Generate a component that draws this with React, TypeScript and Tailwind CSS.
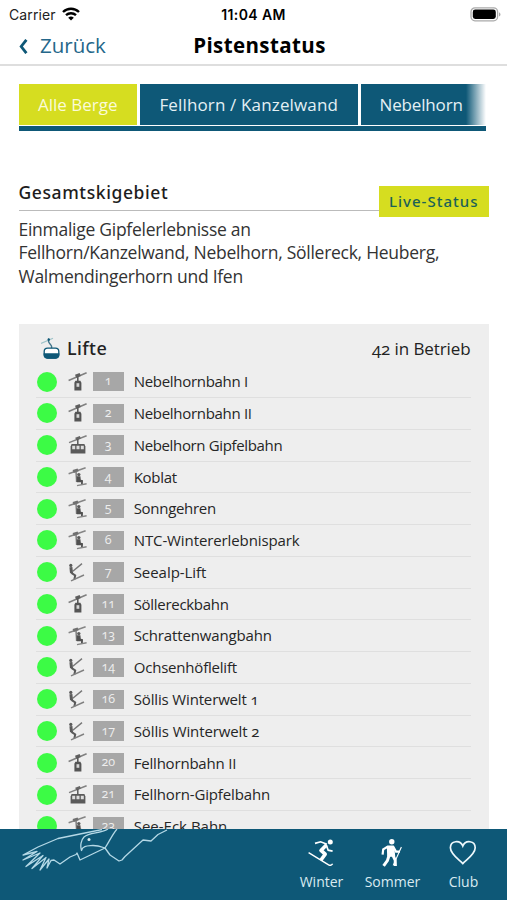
import React from "react";

type LiftKind = "gondola" | "cabin" | "chair" | "drag";

const lifts: { kind: LiftKind; nr: string; name: string; tracking: string }[] = [
  { kind: "gondola", nr: "1", name: "Nebelhornbahn I", tracking: "tracking-[-0.3px]" },
  { kind: "gondola", nr: "2", name: "Nebelhornbahn II", tracking: "tracking-[-0.3px]" },
  { kind: "cabin", nr: "3", name: "Nebelhorn Gipfelbahn", tracking: "tracking-[-0.35px]" },
  { kind: "chair", nr: "4", name: "Koblat", tracking: "tracking-[-0.3px]" },
  { kind: "chair", nr: "5", name: "Sonngehren", tracking: "tracking-[-0.3px]" },
  { kind: "chair", nr: "6", name: "NTC-Wintererlebnispark", tracking: "tracking-[-0.1px]" },
  { kind: "drag", nr: "7", name: "Seealp-Lift", tracking: "tracking-[-0.05px]" },
  { kind: "gondola", nr: "11", name: "Söllereckbahn", tracking: "tracking-[-0.3px]" },
  { kind: "chair", nr: "13", name: "Schrattenwangbahn", tracking: "tracking-[-0.15px]" },
  { kind: "drag", nr: "14", name: "Ochsenhöflelift", tracking: "tracking-[-0.2px]" },
  { kind: "drag", nr: "16", name: "Söllis Winterwelt 1", tracking: "tracking-[-0.15px]" },
  { kind: "drag", nr: "17", name: "Söllis Winterwelt 2", tracking: "tracking-[-0.1px]" },
  { kind: "gondola", nr: "20", name: "Fellhornbahn II", tracking: "tracking-[-0.2px]" },
  { kind: "cabin", nr: "21", name: "Fellhorn-Gipfelbahn", tracking: "tracking-[-0.15px]" },
  { kind: "chair", nr: "23", name: "See-Eck Bahn", tracking: "tracking-normal" },
];

function LiftIcon({ kind }: { kind: LiftKind }) {
  return (
    <svg width="20" height="20" viewBox="0 0 20 20" fill="none" stroke="#5a5a5a" className="shrink-0">
      {kind === "gondola" && (
        <>
          <path d="M.6 8.4 18.6.8" stroke="#808080" strokeWidth="1.6" />
          <path d="M7 2.8l4.6-1.8 1.2 3-4.6 1.8z" fill="#5e5e5e" stroke="none" />
          <path d="M9.8 4v6" strokeWidth="1.6" />
          <path d="M7.4 8.8h5l1 2v7.8H6.4v-7.8z" fill="#555" stroke="none" />
          <path d="M8.5 11.2h2.8v3.6H8.5z" fill="#d5d5d5" stroke="none" />
        </>
      )}
      {kind === "cabin" && (
        <>
          <path d="M1 7.6 18.6.8" stroke="#808080" strokeWidth="1.5" />
          <path d="M7.2 2.7l4.6-1.7 1.1 2.6-4.6 1.7z" fill="#666" stroke="none" />
          <path d="M9.8 4v6" strokeWidth="1.5" />
          <path d="M3.6 9h12.8l1 2.6v6.8H2.6v-6.8z" fill="#5a5a5a" stroke="none" />
          <path d="M4.2 10.8h3v3.4h-3zM8.5 10.8h3v3.4h-3zM12.8 10.8h3v3.4h-3z" fill="#ddd" stroke="none" />
        </>
      )}
      {kind === "chair" && (
        <>
          <path d="M.6 6.8 17.6.8" stroke="#858585" strokeWidth="1.5" />
          <path d="M4.6 3l5-1.6 1.1 2.8-5 1.7z" fill="#707070" stroke="none" />
          <path d="M8 4.4l.6 10.6" stroke="#777" strokeWidth="1.4" />
          <circle cx="10.8" cy="7.6" r="1.7" fill="#5a5a5a" stroke="none" />
          <path d="M8.8 9.2h3.6l.4 3.6 2.2.4-.2 4.2h-1.8l.1-2.2H8.8z" fill="#505050" stroke="none" />
          <path d="M9 18.6 18.6 16.8" stroke="#858585" strokeWidth="1.4" />
        </>
      )}
      {kind === "drag" && (
        <>
          <path d="M4.8 9.2 14 1.6" stroke="#777" strokeWidth="1.4" />
          <circle cx="2.8" cy="3.4" r="1.6" fill="#5a5a5a" stroke="none" />
          <path d="M2.9 5.2l.6 6" strokeWidth="3" />
          <path d="M3.4 10.8l3.8 2.6-.8 3.8" strokeWidth="2" />
          <path d="M3 18.8 16 13" stroke="#808080" strokeWidth="1.4" />
        </>
      )}
    </svg>
  );
}

function StatusBar() {
  return (
    <div className="flex h-7 items-center justify-between pl-[9px] pr-[6px] font-['Inter','Liberation_Sans',sans-serif] text-black">
      <div className="flex w-40 items-center gap-[6px]">
        <span className="text-[14px] tracking-[0.1px] text-[#222]">Carrier</span>
        <svg width="18" height="14" viewBox="0 0 18 14" fill="none" stroke="#000" strokeWidth="2.4">
          <path d="M1 5a11.6 11.6 0 0 1 16 0" />
          <path d="M4 8.2a7.4 7.4 0 0 1 10 0" />
          <path d="M9 13.6 6.2 10.8a4 4 0 0 1 5.6 0z" fill="#000" stroke="none" />
        </svg>
      </div>
      <span className="-ml-[3px] text-[14px] font-semibold tracking-[0.4px]">11:04 AM</span>
      <div className="flex w-40 justify-end">
        <svg width="31" height="15" viewBox="0 0 31 15">
          <rect x="1" y=".8" width="26.6" height="13" rx="4" fill="#fff" stroke="#aaa" strokeWidth="1.3" />
          <rect x="2.8" y="2.6" width="23" height="9.4" rx="2.4" fill="#000" />
          <path d="M29 5.2c2 .8 2 3.6 0 4.4z" fill="#aaa" />
        </svg>
      </div>
    </div>
  );
}

function Header() {
  return (
    <header className="relative flex h-[38px] items-center border-b-2 border-[#dedede] pl-[18px]">
      <svg width="10" height="15" viewBox="0 0 10 15" fill="none" stroke="#0e5877" strokeWidth="2.8">
        <path d="M8.4 .8 3.2 7.5l5.2 6.7" />
      </svg>
      <span className="ml-[12px] pb-px text-[20.5px] text-[#24678a]">Zurück</span>
      <h1 className="absolute inset-x-0 top-[3px] pl-[12px] text-center text-[20.5px] leading-7 font-bold tracking-[0.4px] text-black">
        Pistenstatus
      </h1>
    </header>
  );
}

function Tabs() {
  return (
    <nav className="relative ml-[18.5px] mt-[18px] w-[467px] overflow-hidden border-b-[5px] border-[#0e5877] text-[17px] text-[#e4f0f4]">
      <div className="mb-px flex h-[41px] gap-[3px] whitespace-nowrap">
        <div className="flex w-[118.5px] shrink-0 items-center justify-center bg-[#d6dd20] text-[#fbfbd8]">Alle Berge</div>
        <div className="flex w-[217.5px] shrink-0 items-center justify-center bg-[#0e5877] tracking-[0.15px]">Fellhorn / Kanzelwand</div>
        <div className="flex w-[125px] shrink-0 items-center bg-[#0e5877] pl-[19px] tracking-[-0.15px]">Nebelhorn</div>
      </div>
      <div className="absolute -bottom-[5px] right-0 top-0 w-[20px] bg-linear-to-r from-white/0 to-white" />
    </nav>
  );
}

function Intro() {
  return (
    <section className="ml-[18.5px] mt-[49px] w-[470.5px]">
      <div className="relative flex h-[31px] border-b border-[#bbb] font-['Noto_Sans',sans-serif]">
        <h2 className="text-[17.5px] leading-6 font-medium tracking-[0.6px] text-[#1d1d1d]">Gesamtskigebiet</h2>
        <div className="absolute right-0 top-[6px] flex h-[31px] w-[110.5px] items-center justify-center bg-[#d6dd20] text-[15px] font-medium tracking-[1px] text-[#1c6257]">
          Live-Status
        </div>
      </div>
      <p className="mt-[7px] text-[17.5px] leading-[23.4px] tracking-[-0.27px] text-[#333]">
        Einmalige Gipfelerlebnisse an
        <br />
        Fellhorn/Kanzelwand, Nebelhorn, Söllereck, Heuberg,
        <br />
        Walmendingerhorn und Ifen
      </p>
    </section>
  );
}

function LiftList() {
  return (
    <section className="ml-[18.5px] mt-[36px] w-[470.5px] bg-[#eee] pl-[17.5px] pr-[18.5px]">
      <div className="flex h-[42px] items-center pt-[7px] text-[17.5px] text-[#222]">
        <svg width="19" height="23" viewBox="0 0 19 23" fill="none" className="ml-[5px]">
          <path d="M0 6.5 12 1.2" stroke="#9fc3c9" strokeWidth="1.2" />
          <path d="M7.6 1.2v3.4c0 2 3 2.8 3 5v2" stroke="#42758a" strokeWidth="1.4" />
          <circle cx="7.8" cy="2.6" r="1.2" fill="#0e5877" />
          <rect x="3.2" y="11.2" width="14.6" height="9.8" rx="3.4" fill="#fff" stroke="#0e5877" strokeWidth="1.3" />
          <path d="M2.6 16.2h15.8v1.6c0 2.6-1.8 4-4 4H6.6c-2.2 0-4-1.4-4-4z" fill="#0e5877" />
        </svg>
        <h3 className="ml-[7px] font-['Noto_Sans',sans-serif] text-[18px] font-medium tracking-[0.4px]">Lifte</h3>
        <span className="ml-auto text-[17px] tracking-[-0.1px] oldstyle-nums">42 in Betrieb</span>
      </div>
      {lifts.map((lift) => (
        <div key={lift.nr} className="flex h-[31.77px] items-center border-b border-[#dfdfdf] pl-[0.7px]">
          <span className="size-5 shrink-0 rounded-full bg-[#3cfb45]" />
          <span className="ml-[11px] flex"><LiftIcon kind={lift.kind} /></span>
          <span className="ml-[5px] flex h-[19.5px] w-[31px] items-center justify-center bg-[#a7a7a7] text-[12.5px] text-[#eee] oldstyle-nums">
            {lift.nr}
          </span>
          <span className={`ml-[10px] text-[15px] text-[#262626] oldstyle-nums ${lift.tracking}`}>{lift.name}</span>
        </div>
      ))}
    </section>
  );
}

function BottomBar() {
  const item = "flex w-[71px] flex-col items-center text-[14px] leading-[18px] text-[#d9ebf1]";
  return (
    <footer className="absolute inset-x-0 bottom-0 flex h-[71px] justify-between bg-[#0e5877]">
      <svg width="190" height="71" viewBox="0 829 190 71" fill="none" stroke="#b4d8e6" strokeWidth="1.3" strokeLinejoin="round">
        <path d="M102 829.5 80 834 58 838.5 38 847 23 855 37 851.500 23 860 40 853 26 866.500 43 855.500 32 868.500 46 857.500 40 870 49 859 47 868 51 860.500 54 860 60 864 70 857 76 854.500 77 853 80 860 105 848" />
        <path d="M108 829C100 834 90 832 84 837 81 840 80 846 81.500 850.500 82.500 845.500 88 846 93 845.500 98 845.500 102 847 105 848 109 842 112 835 117 829" />
        <path d="M105 848 110 855 119 861 122 860 125 856.500 143 840 151 841 158 834.500 167 830" />
        <circle cx="89" cy="839.5" r="1.5" fill="#d9ebf1" stroke="none" />
      </svg>
      <div className="flex pr-[8px] pt-[10px]">
        <div className={item}>
          <svg width="28" height="28" viewBox="0 0 28 28" fill="none" stroke="#fff" className="mb-[6px]">
            <circle cx="22.3" cy="3" r="2.5" fill="#fff" stroke="none" />
            <path d="M18.6 5.8 13 11.4l4.2 3.8-4.4 6" strokeWidth="3.6" strokeLinejoin="round" />
            <path d="M19 5.2 12.6 2.8 7 4.4M18.6 7l1.6 4.2 4.4 1" strokeWidth="1.7" />
            <path d="m.6 13.6 20 12.2c2 1 3.4.2 4-1" strokeWidth="1.4" />
          </svg>
          Winter
        </div>
        <div className={item}>
          <svg width="28" height="28" viewBox="0 0 28 28" fill="none" stroke="#fff" className="mb-[6px]">
            <circle cx="12.8" cy="2.8" r="2.7" fill="#fff" stroke="none" />
            <path d="M8.6 7.4h5.8l1 9.6H9z" fill="#fff" strokeWidth="1.6" strokeLinejoin="round" />
            <path d="M8.6 7.8 4.2 10.4l-.6 5.2M14.4 8l2.6 4.6h4" strokeWidth="2.2" />
            <path d="M10.2 16 8.4 21.6l-3.8 5.2M13.8 16l2.4 5 .2 6" strokeWidth="3" />
            <path d="m22.4 8-8.2 18.4" strokeWidth="1.1" />
          </svg>
          Sommer
        </div>
        <div className={item}>
          <svg width="28" height="28" viewBox="0 0 28 28" fill="none" stroke="#eef8fc" strokeWidth="1.7" className="mb-[6px] overflow-visible">
            <path d="M12.8 24.6C8.4 20.2.4 15 .4 8.800.4 1.400 10.200.6 12.800 7 15.400.6 25.200 1.400 25.200 8.800c0 6.200-8 11.400-12.400 15.800z" />
          </svg>
          Club
        </div>
      </div>
    </footer>
  );
}

export default function App() {
  return (
    <main className="relative h-[900px] w-[507px] overflow-hidden bg-white font-['Open_Sans','Noto_Sans',sans-serif]">
      <StatusBar />
      <Header />
      <Tabs />
      <Intro />
      <LiftList />
      <BottomBar />
    </main>
  );
}
